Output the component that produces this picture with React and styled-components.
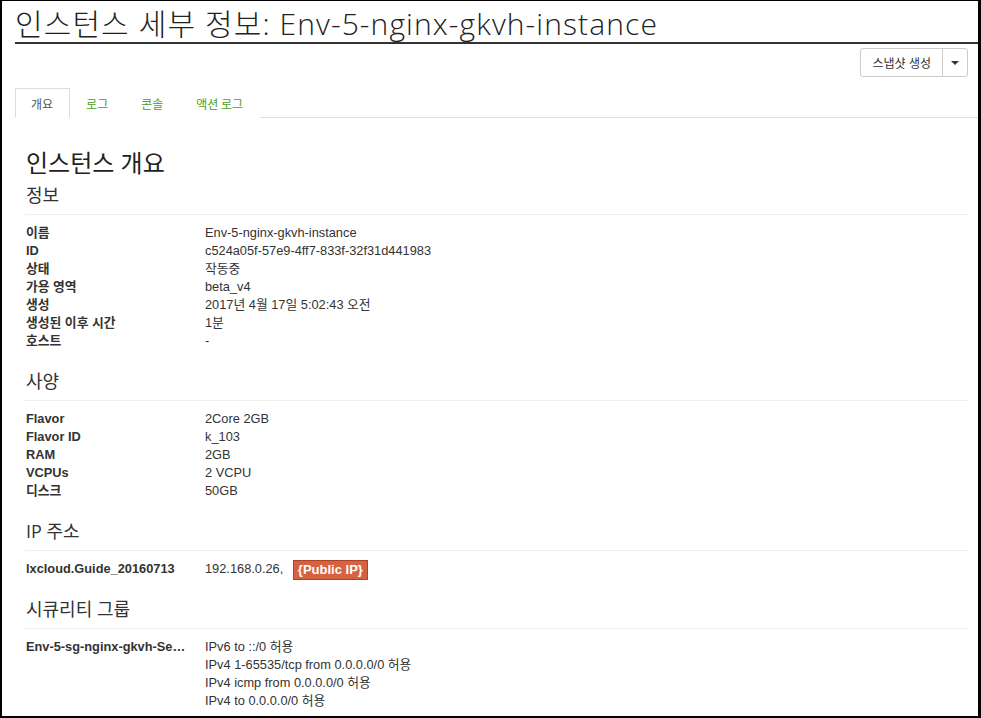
import React from "react";
import styled, { createGlobalStyle } from "styled-components";

const GlobalStyle = createGlobalStyle`
  html, body {
    margin: 0;
    padding: 0;
    background: #fff;
  }
  body {
    font-family: "Liberation Sans", "Noto Sans CJK KR", sans-serif;
    font-size: 12.8px;
    color: #333;
  }
  * { box-sizing: border-box; }
`;

const overview = [
  { title: "정보", rows: [
    ["이름", "Env-5-nginx-gkvh-instance"],
    ["ID", "c524a05f-57e9-4ff7-833f-32f31d441983"],
    ["상태", "작동중"],
    ["가용 영역", "beta_v4"],
    ["생성", "2017년 4월 17일 5:02:43 오전"],
    ["생성된 이후 시간", "1분"],
    ["호스트", "-"],
  ]},
  { title: "사양", rows: [
    ["Flavor", "2Core 2GB"],
    ["Flavor ID", "k_103"],
    ["RAM", "2GB"],
    ["VCPUs", "2 VCPU"],
    ["디스크", "50GB"],
  ]},
];

const securityRules = [
  "IPv6 to ::/0 허용",
  "IPv4 1-65535/tcp from 0.0.0.0/0 허용",
  "IPv4 icmp from 0.0.0.0/0 허용",
  "IPv4 to 0.0.0.0/0 허용",
];

function CaretIcon() {
  return (
    <svg width="8" height="4" viewBox="0 0 8 4">
      <path d="M0 0 L8 0 L4 4 Z" fill="#333" />
    </svg>
  );
}

export default function App() {
  return (
    <>
      <GlobalStyle />
      <Frame>
        <PageTitle>인스턴스 세부 정보: Env-5-nginx-gkvh-instance</PageTitle>

        <Toolbar>
          <BtnGroup>
            <Btn>스냅샷 생성</Btn>
            <Btn $caret><CaretIcon /></Btn>
          </BtnGroup>
        </Toolbar>

        <Tabs>
          <Tab $active>개요</Tab>
          <Tab>로그</Tab>
          <Tab>콘솔</Tab>
          <Tab>액션 로그</Tab>
        </Tabs>

        <Content>
          <OverviewTitle>인스턴스 개요</OverviewTitle>

          {overview.map((section, i) => (
            <Section key={section.title}>
              <SectionTitle $first={i === 0}>{section.title}</SectionTitle>
              <Divider />
              <DetailList>
                {section.rows.map(([label, value]) => (
                  <React.Fragment key={label}>
                    <Term>{label}</Term>
                    <Desc>{value}</Desc>
                  </React.Fragment>
                ))}
              </DetailList>
            </Section>
          ))}

          <Section>
            <SectionTitle>IP 주소</SectionTitle>
            <Divider />
            <DetailList>
              <Term>lxcloud.Guide_20160713</Term>
              <Desc>
                192.168.0.26, <Badge>{"{Public IP}"}</Badge>
              </Desc>
            </DetailList>
          </Section>

          <Section>
            <SectionTitle>시큐리티 그룹</SectionTitle>
            <Divider />
            <DetailList>
              <Term title="Env-5-sg-nginx-gkvh-SecurityGroup">Env-5-sg-nginx-gkvh-SecurityGroup</Term>
              <Desc>
                {securityRules.map((rule) => (
                  <RuleLine key={rule}>{rule}</RuleLine>
                ))}
              </Desc>
            </DetailList>
          </Section>
        </Content>
      </Frame>
    </>
  );
}

const Frame = styled.div`
  width: 981px;
  height: 718px;
  overflow: hidden;
  border-style: solid;
  border-color: #000;
  border-width: 1px 3px 2px 2px;
  padding-left: 13px;
  background: #fff;
`;

const PageTitle = styled.h1`
  margin: 0;
  padding-top: 5px;
  height: 43px;
  line-height: 36px;
  font-family: "Open Sans", "Noto Sans CJK KR", sans-serif;
  font-weight: 300;
  font-size: 30px;
  letter-spacing: 1.1px;
  color: #222;
  border-bottom: 2px solid #333;
  white-space: nowrap;
`;

const Toolbar = styled.div`
  display: flex;
  justify-content: flex-end;
  padding: 4px 10px 0 0;
`;

const BtnGroup = styled.div`
  display: flex;
`;

const Btn = styled.button`
  height: 29px;
  padding: ${(p) => (p.$caret ? "0 8px" : "0 11px")};
  display: flex;
  align-items: center;
  justify-content: center;
  background: #fff;
  border: 1px solid #ccc;
  color: #333;
  font-family: "Liberation Sans", "Noto Sans CJK KR", sans-serif;
  font-size: 12px;
  cursor: pointer;
  border-radius: ${(p) => (p.$caret ? "0 3px 3px 0" : "3px 0 0 3px")};
  margin-left: ${(p) => (p.$caret ? "-1px" : "0")};
  width: ${(p) => (p.$caret ? "26px" : "auto")};
`;

const Tabs = styled.ul`
  list-style: none;
  margin: 11px 0 0;
  padding: 0;
  display: flex;
  border-bottom: 1px solid #ddd;
`;

const Tab = styled.li`
  height: 30px;
  margin-bottom: -1px;
  padding: 0 16px 0 15px;
  display: flex;
  align-items: center;
  font-family: "Noto Sans CJK KR", sans-serif;
  font-size: 12px;
  color: ${(p) => (p.$active ? "#555" : "#4a9e1c")};
  background: #fff;
  border: 1px solid ${(p) => (p.$active ? "#ddd" : "transparent")};
  border-bottom-color: ${(p) => (p.$active ? "#fff" : "transparent")};
  cursor: pointer;
`;

const Content = styled.div`
  padding: 0 10px;
`;

const OverviewTitle = styled.h3`
  margin: 31px 0 0;
  padding-left: 1px;
  font-family: "Open Sans", "Noto Sans CJK KR", sans-serif;
  font-weight: 400;
  font-size: 24px;
  line-height: 28px;
  color: #222;
`;

const Section = styled.section``;

const SectionTitle = styled.h4`
  margin: ${(p) => (p.$first ? "8px" : "21px")} 0 0;
  padding-left: 1px;
  font-family: "Open Sans", "Noto Sans CJK KR", sans-serif;
  font-weight: 400;
  font-size: 18px;
  line-height: 20px;
  color: #333;
`;

const Divider = styled.hr`
  margin: 9px 0 9px;
  border: 0;
  border-top: 1px solid #eee;
`;

const DetailList = styled.dl`
  margin: 0;
  padding-left: 1px;
  display: grid;
  grid-template-columns: 160px 1fr;
  column-gap: 19px;
  line-height: 18px;
`;

const Term = styled.dt`
  font-weight: 700;
  color: #333;
  white-space: nowrap;
  overflow: hidden;
  text-overflow: ellipsis;
`;

const Desc = styled.dd`
  margin: 0;
  color: #333;
`;

const RuleLine = styled.div``;

const Badge = styled.span`
  display: inline-block;
  margin: -3px 0 -3px 6px;
  padding: 0 4px;
  height: 20px;
  line-height: 18px;
  vertical-align: middle;
  background: #d8613f;
  border: 1px solid #a9432a;
  color: #fff;
  font-family: "Liberation Sans", sans-serif;
  font-weight: 700;
  font-size: 13px;
`;
